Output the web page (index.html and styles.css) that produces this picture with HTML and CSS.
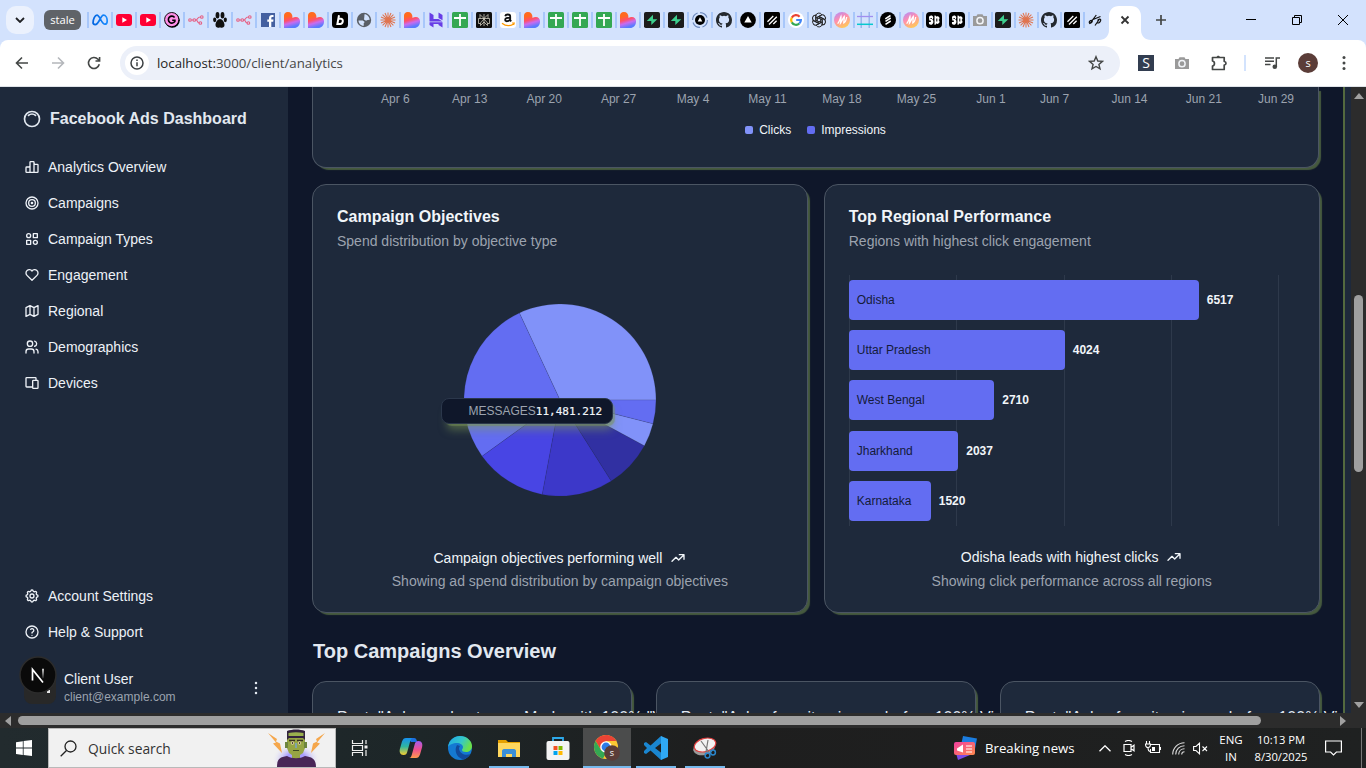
FILE: index.html
```html
<!DOCTYPE html>
<html lang="en">
<head>
<meta charset="utf-8">
<title>Facebook Ads Dashboard</title>
<link rel="stylesheet" href="styles.css">
</head>
<body>
<svg class="defs" width="0" height="0" aria-hidden="true">
  <defs>
    <linearGradient id="gHeart" x1="0" y1="0" x2="0.3" y2="1"><stop offset=".3" stop-color="#ff6a1f"/><stop offset=".55" stop-color="#ff4f6a"/><stop offset=".75" stop-color="#c86bf0"/><stop offset="1" stop-color="#5a7bff"/></linearGradient>
    <linearGradient id="gMeta" x1="0" x2="1"><stop offset="0" stop-color="#0064e0"/><stop offset="1" stop-color="#1a8cff"/></linearGradient>
    <linearGradient id="gM" x1="0" y1="0" x2=".5" y2="1"><stop offset="0" stop-color="#a98bff"/><stop offset=".5" stop-color="#ff8fb0"/><stop offset="1" stop-color="#ffc55c"/></linearGradient>
    <linearGradient id="gCop1" x1="0" y1="0" x2="0" y2="1"><stop offset="0" stop-color="#1690f0"/><stop offset=".5" stop-color="#30b6a0"/><stop offset="1" stop-color="#f7cf2e"/></linearGradient>
    <linearGradient id="gCop2" x1="0" y1="0" x2="0" y2="1"><stop offset="0" stop-color="#a45cf0"/><stop offset=".5" stop-color="#f0508e"/><stop offset="1" stop-color="#ff9a4c"/></linearGradient>
    <linearGradient id="gEdge" x1="0" y1="0" x2="1" y2=".4"><stop offset="0" stop-color="#1ea5e8"/><stop offset=".6" stop-color="#35c8c8"/><stop offset="1" stop-color="#6ae04a"/></linearGradient>
    <linearGradient id="gNews" x1="0" y1="0" x2="1" y2="1"><stop offset="0" stop-color="#f03fa0"/><stop offset="1" stop-color="#ff8a4c"/></linearGradient>
    <radialGradient id="gGlow"><stop offset=".4" stop-color="#a79bff"/><stop offset="1" stop-color="#f1f1f1" stop-opacity="0"/></radialGradient>
    <linearGradient id="gN" x1="0" y1="0" x2="0" y2="1"><stop offset="0" stop-color="#fff"/><stop offset="1" stop-color="#fff" stop-opacity=".1"/></linearGradient>

    <symbol id="meta" viewBox="0 0 16 16"><path d="M1 11.2C1 7 3 3.2 5 3.2c2.800 0 4.500 9 8 9 1.600 0 2.200-1.300 2.200-3.200 0-3-1.500-5.800-3.700-5.800C8.500 3.200 7 12.600 3.200 12.600 1.800 12.600 1 12 1 10.600" fill="none" stroke="url(#gMeta)" stroke-width="1.7"/></symbol>
    <symbol id="yt" viewBox="0 0 16 16"><rect y="2" width="16" height="12" rx="3" fill="#ff0033"/><path d="M6.300 5.300v5.400L11 8z" fill="#fff"/></symbol>
    <symbol id="gp" viewBox="0 0 16 16"><circle cx="8.300" cy="8.300" r="7.500" fill="#000"/><circle cx="7.700" cy="7.600" r="7.100" fill="#ff90e8" stroke="#000" stroke-width=".9"/><path d="M10.600 5.400a3.500 3.500 0 1 0 .3 4V8.200H8.200" fill="none" stroke="#000" stroke-width="1.600"/></symbol>
    <symbol id="n8n" viewBox="0 0 16 16"><g fill="none" stroke="#ea4b71" stroke-width="1.100" opacity=".85"><circle cx="2" cy="8" r="1.300"/><circle cx="6.300" cy="8" r="1.300"/><circle cx="13.800" cy="5" r="1.300"/><circle cx="12.400" cy="11" r="1.300"/><path d="M3.300 8H5M7.600 8c2.600 0 1-3 4.900-3M8 8c2 .2 1 3 3.100 3"/></g></symbol>
    <symbol id="paw" viewBox="0 0 16 16"><g fill="#111"><ellipse cx="5.500" cy="3.300" rx="1.900" ry="3.200"/><ellipse cx="10.500" cy="3.300" rx="1.900" ry="3.200"/><ellipse cx="2.700" cy="7.800" rx="1.600" ry="2.400"/><ellipse cx="13.300" cy="7.800" rx="1.600" ry="2.400"/><path d="M8 7c2.500 0 4.500 3.500 4.500 6s-2.500 3.500-4.500 2.300c-2 1.200-4.500.2-4.500-2.300S5.500 7 8 7z"/></g></symbol>
    <symbol id="fb" viewBox="0 0 16 16"><path fill="#4460a0" d="M1 1h14v14H1z"/><path fill="#fff" d="M9 15V9.700H7.300V7.500H9V6c0-2 1.200-3 3-3h1.500v2h-1c-.9 0-1.200.400-1.200 1.200v1.300h2.200l-.3 2.200h-1.900V15z"/></symbol>
    <symbol id="heart" viewBox="0 0 16 16"><path fill="url(#gHeart)" d="M0 4A3.800 3.800 0 0 1 4 0C7 0 8.600 2 8.500 6c.8-.6 2-1 3.300-1A4.200 4.200 0 0 1 16 9.500C16 13.500 13.500 16 10 16H0z"/></symbol>
    <symbol id="bb" viewBox="0 0 16 16"><rect width="16" height="16" rx="3.500"/><path d="M7 3.300 5.400 12h2.800c3 0 3.600-5 .9-5.300H6.300" fill="none" stroke="#fff" stroke-width="2"/></symbol>
    <symbol id="globe" viewBox="0 0 16 16"><circle cx="8" cy="8" r="7.200" fill="#5a5f66"/><path fill="#d3e3fd" d="M2.500 8.500h4.200l2 1.600-1 1.200.1 2.500c-3 .2-5.300-2.500-5.300-5.300zM8.500 2.300c2.700 0 5 2.600 5.200 5.500l-2.200.2-1.500.8-2-1.300.3-2.500z"/></symbol>
    <symbol id="claude" viewBox="0 0 16 16"><path d="M8 .5v15M.5 8h15M2.600 2.700l10.800 10.600M2.600 13.300 13.400 2.700M5 1l6 14M11 1 5 15M1 5l14 6M1 11l14-6" stroke="#e0744f" stroke-width="1.050"/></symbol>
    <symbol id="host" viewBox="0 0 16 16"><path fill="#673de6" d="M1.500.5 5.500 3v4h5l4 2.500h-13zM10.500 6V.5l4 2.500v5.300zM1.500 10.200H14.500v5.300l-4-2.500v-1H5.500v3.500l-4-2.500z"/></symbol>
    <symbol id="sheet" viewBox="0 0 16 16"><rect width="16" height="16" rx="1.500" fill="#34a853"/><path d="M8 2v12M2 6h12" stroke="#fff" stroke-width="1.800"/></symbol>
    <symbol id="perp" viewBox="0 0 16 16"><rect width="16" height="16" rx="1.500" fill="#101010"/><path d="M8 2v12M4 2.500l4 4 4-4v4.000M4 2.500v4M2.500 6.500h11v5H12L8 7l-4 4.500H2.500zM4.500 11v2.500L8 10l3.500 3.500V11" fill="none" stroke="#e7e2d2" stroke-width=".7"/></symbol>
    <symbol id="amz" viewBox="0 0 16 16"><rect width="16" height="16" rx="3" fill="#fff"/><path d="M5.200 4.200c.5-2.300 5-2.300 5 .2v3.800l1 1.100M10 5.700c-3 0-5 .500-4.800 2.300.3 2 3.800 1.400 4.900-.7" fill="none" stroke="#111" stroke-width="1.800"/><path d="M2 11.200c3.500 2.900 8 2.900 11.500 1M12 11h2.200l-.6 2" fill="none" stroke="#f90" stroke-width="1.200"/></symbol>
    <symbol id="supa" viewBox="0 0 16 16"><rect width="16" height="16" rx="1.800" fill="#1c1c1c"/><path fill="#3ecf8e" d="M9 2.800v4.400h4.300L7.300 13V9H2.800z"/></symbol>
    <symbol id="ring" viewBox="0 0 16 16"><circle cx="8" cy="8" r="7.400" fill="none" stroke="#6a87bc" stroke-width="1.100" stroke-dasharray="9 2.600"/><circle cx="8" cy="8" r="5"/><path fill="#fff" d="m8 5.300 2.300 4.200H5.700z"/></symbol>
    <symbol id="gh" viewBox="0 0 16 16"><path fill="#24292f" d="M8 0C3.580 0 0 3.580 0 8c0 3.540 2.290 6.530 5.470 7.590.4.070.55-.17.55-.38 0-.19-.01-.82-.01-1.490-2.010.37-2.530-.49-2.690-.94-.09-.23-.48-.94-.82-1.130-.28-.15-.68-.52-.01-.53.63-.01 1.080.58 1.230.82.720 1.210 1.870.87 2.330.66.070-.52.280-.87.510-1.070-1.780-.2-3.640-.89-3.640-3.950 0-.87.310-1.590.82-2.150-.08-.2-.36-1.020.08-2.120 0 0 .67-.21 2.200.82a7.700 7.700 0 0 1 4 0c1.530-1.040 2.200-.82 2.200-.82.440 1.100.160 1.920.080 2.120.510.560.820 1.270.820 2.150 0 3.070-1.870 3.750-3.650 3.950.290.250.540.730.540 1.480 0 1.070-.01 1.930-.01 2.200 0 .210.150.460.550.380A8.010 8.010 0 0 0 16 8c0-4.420-3.580-8-8-8z"/></symbol>
    <symbol id="tri" viewBox="0 0 16 16"><circle cx="8" cy="8" r="7.900"/><path fill="#fff" d="m8 4 3.700 6.500H4.300z"/></symbol>
    <symbol id="slash" viewBox="0 0 16 16"><rect width="16" height="16" rx="1.500"/><path d="m3.500 9.800 5.800-5.800M5 12.500 12.800 4.700M9.300 12l3.300-3.300" stroke="#fff" stroke-width="1.300"/></symbol>
    <symbol id="goog" viewBox="0 0 16 16"><circle cx="8" cy="8" r="8" fill="#fff"/><g fill="none" stroke-width="2.200"><path d="M11.600 4.700A4.900 4.900 0 0 0 3.800 5.600" stroke="#ea4335"/><path d="M3.800 5.600a4.900 4.900 0 0 0 0 4.800" stroke="#fbbc05"/><path d="M3.800 10.400a4.900 4.900 0 0 0 7.500 1.100" stroke="#34a853"/><path d="M11.300 11.500A4.900 4.900 0 0 0 12.900 8H8.200" stroke="#4285f4"/></g></symbol>
    <symbol id="oai" viewBox="0 0 16 16"><g fill="none" stroke="#222" stroke-width=".95"><g id="petal"><path d="M4.800 9.500V4.200a3.200 3.200 0 0 1 6-1.500L6.300 5.300V9"/></g><use href="#petal" transform="rotate(60 8 8)"/><use href="#petal" transform="rotate(120 8 8)"/><use href="#petal" transform="rotate(180 8 8)"/><use href="#petal" transform="rotate(240 8 8)"/><use href="#petal" transform="rotate(300 8 8)"/></g></symbol>
    <symbol id="emm" viewBox="0 0 16 16"><circle cx="8" cy="8" r="8" fill="url(#gM)"/><path d="M3.500 11.500C5 11 6 7 7 4.500c.4 2-.4 5-.5 6.500C8 9 9 6 10.300 4.500c.2 2-.6 5-.5 6.500.8-.3 2-1 2.900-6" fill="none" stroke="#fff" stroke-width="1.300"/></symbol>
    <symbol id="frame" viewBox="0 0 16 16"><path d="M4.200 0v16M12.200 0v16" stroke="#8fb0e8" stroke-width="1.300"/><path d="M0 4.500h16" stroke="#a08ff0" stroke-width="1.300"/><path d="M0 12.300h16" stroke="#08c8d0" stroke-width="1.500"/></symbol>
    <symbol id="ess" viewBox="0 0 16 16"><circle cx="8" cy="8" r="8"/><path d="m5.300 6.800 5.200-3.300M5.500 9.300l5.200-3.300M5.500 12.300l5.200-3.300" stroke="#fff" stroke-width="1.500"/></symbol>
    <symbol id="kk" viewBox="0 0 16 16"><rect width="16" height="16" rx="4"/><path fill="#fff" d="M3 5.500C3 3 7 2.500 7.300 5.500c0 1-.4 1.700-1 2.300 1.600.5 1.600 4-.6 4.900C3.500 13.300 2.500 11.500 3 10h1.800V8.500H3.300zM8.500 3.500c1 0 1.700.3 1.700 1.200 1.500-1.200 3.600 0 3.300 1.800-.1.800-.5 1.300-1 1.600 1 .4 1.400 2 .6 3-.8 1-2.200 1-2.900.2 0 1-.7 1.500-1.700 1.500z"/><path d="M4.500 6.500h1.300M10.800 6.500v3" stroke="#000" stroke-width="1"/></symbol>
    <symbol id="cam" viewBox="0 0 16 16"><path fill="#9a9a9a" d="M1 4h3.500l1-1.800h5l1 1.800H15v10H1z"/><circle cx="8" cy="8.700" r="3.100" fill="none" stroke="#f2f4f8" stroke-width="1.500"/></symbol>
    <symbol id="dp" viewBox="0 0 16 16"><path d="M2.500 12 9.300 3M8 13.500 12.500 7M5.500 8.500c-2-1-4.500 2-2.500 2.800 1.300 0 2.500-1.500 2.300-2.800M10.500 8.500c1.500-2.500 4-1.500 3 .5s-2.500 2.500-3.500 1.500M6 7.500 13.500 4.500" fill="none" stroke="#111" stroke-width="1.200"/></symbol>
    <symbol id="trend" viewBox="0 0 24 24"><path d="M3 17l6-6 4 4 8-8M14 7h7v7"/></symbol>
  </defs>
</svg>

<header class="tabstrip">
  <div class="tab-search"><svg width="10" height="6" viewBox="0 0 10 6"><path d="M1 1l4 4 4-4" fill="none" stroke="#202124" stroke-width="1.800"/></svg></div>
  <div class="tab-group">stale</div>
  <div class="tabs">
    <i><svg><use href="#meta"/></svg></i><i><svg><use href="#yt"/></svg></i><i><svg><use href="#yt"/></svg></i><i><svg><use href="#gp"/></svg></i><i><svg><use href="#n8n"/></svg></i><i><svg><use href="#paw"/></svg></i><i><svg><use href="#n8n"/></svg></i><i><svg><use href="#fb"/></svg></i><i><svg><use href="#heart"/></svg></i><i><svg><use href="#heart"/></svg></i><i><svg><use href="#bb"/></svg></i><i><svg><use href="#globe"/></svg></i><i><svg><use href="#claude"/></svg></i><i><svg><use href="#heart"/></svg></i><i><svg><use href="#host"/></svg></i><i><svg><use href="#sheet"/></svg></i><i><svg><use href="#perp"/></svg></i><i><svg><use href="#amz"/></svg></i><i><svg><use href="#heart"/></svg></i><i><svg><use href="#sheet"/></svg></i><i><svg><use href="#sheet"/></svg></i><i><svg><use href="#sheet"/></svg></i><i><svg><use href="#heart"/></svg></i><i><svg><use href="#supa"/></svg></i><i><svg><use href="#supa"/></svg></i><i><svg><use href="#ring"/></svg></i><i><svg><use href="#gh"/></svg></i><i><svg><use href="#tri"/></svg></i><i><svg><use href="#slash"/></svg></i><i><svg><use href="#goog"/></svg></i>
  </div>
  <div class="tabs narrow">
    <i><svg><use href="#oai"/></svg></i><i><svg><use href="#emm"/></svg></i><i><svg><use href="#frame"/></svg></i><i><svg><use href="#ess"/></svg></i><i><svg><use href="#emm"/></svg></i><i><svg><use href="#kk"/></svg></i><i><svg><use href="#kk"/></svg></i><i><svg><use href="#cam"/></svg></i><i><svg><use href="#supa"/></svg></i><i><svg><use href="#claude"/></svg></i><i><svg><use href="#gh"/></svg></i><i><svg><use href="#slash"/></svg></i><i><svg><use href="#dp"/></svg></i>
  </div>
  <div class="tab-active">
    <svg width="52" height="34" viewBox="0 0 52 34"><path fill="#fff" d="M0 34c6 0 10-4 10-10V10C10 4 14 0 20 0h12c6 0 10 4 10 10v14c0 6 4 10 10 10z"/><path d="M22.500 10.500l7 7M29.500 10.500l-7 7" stroke="#333" stroke-width="1.800"/></svg>
  </div>
  <svg class="tab-new" width="12" height="12" viewBox="0 0 12 12"><path d="M6 1v10M1 6h10" stroke="#444746" stroke-width="1.700"/></svg>
  <div class="window-controls">
    <svg width="12" height="12" viewBox="0 0 12 12"><path d="M1 5.500h10" stroke="#000"/></svg>
    <svg width="12" height="12" viewBox="0 0 12 12"><path d="M1.500 3.500h7v7h-7zM3.500 3.500v-2h7v7h-2" fill="none" stroke="#000"/></svg>
    <svg width="12" height="12" viewBox="0 0 12 12"><path d="M1 1l10 10M11 1L1 11" stroke="#000"/></svg>
  </div>
</header>

<div class="toolbar">
  <div class="nav">
    <svg width="16" height="16" viewBox="0 0 16 16"><path d="M14 8H3M8 2.500 2.500 8 8 13.500" fill="none" stroke="#444746" stroke-width="1.600"/></svg>
    <svg width="16" height="16" viewBox="0 0 16 16"><path d="M2 8h11M8 2.500 13.500 8 8 13.500" fill="none" stroke="#b4b7bb" stroke-width="1.600"/></svg>
    <svg width="16" height="16" viewBox="0 0 16 16"><path d="M13.300 9.300A5.500 5.500 0 1 1 12 4.200l1.300 1.400M13.600 2v4H9.500" fill="none" stroke="#444746" stroke-width="1.600"/></svg>
  </div>
  <div class="omnibox">
    <span class="site-info"><svg width="14" height="14" viewBox="0 0 14 14"><circle cx="7" cy="7" r="6" fill="none" stroke="#3c4043" stroke-width="1.500"/><path d="M7 6.300v4M7 3.500v1.600" stroke="#3c4043" stroke-width="1.500"/></svg></span>
    <span class="url"><b>localhost:</b>3000/client/analytics</span>
    <svg class="star" width="16" height="16" viewBox="0 0 16 16"><path d="m8 1.700 1.800 4.300 4.600.4-3.500 3 1.100 4.500L8 11.500l-4 2.400 1.100-4.500-3.500-3 4.600-.4z" fill="none" stroke="#444746" stroke-width="1.400"/></svg>
  </div>
  <div class="extensions">
    <span class="ext-s">S</span>
    <svg class="ext-cam" width="16" height="16"><use href="#cam"/></svg>
    <svg class="ext-puzzle" width="18" height="18" viewBox="0 0 18 18"><path d="M2.500 3.500h11.700v4c2.400.2 2.400 3.300 0 3.500v4.500H2.500V12c2.600-.5 2.600-4.500 0-5z" fill="none" stroke="#444746" stroke-width="1.700" stroke-linejoin="round"/><path d="M6.500 3.300c.2-2.200 3.300-2.200 3.500 0z" fill="#444746"/></svg>
    <span class="divider"></span>
    <svg class="ext-media" width="16" height="14" viewBox="0 0 16 14"><path d="M1 2h9M1 5.300h9M1 8.600h5.500M12.300 11V2H16" fill="none" stroke="#444746" stroke-width="1.500"/><circle cx="10.800" cy="10.800" r="2.300" fill="#444746"/></svg>
    <span class="profile">s</span>
    <svg class="kebab" width="4" height="16" viewBox="0 0 4 16"><g fill="#444746"><circle cx="2" cy="2.500" r="1.500"/><circle cx="2" cy="8" r="1.500"/><circle cx="2" cy="13.500" r="1.500"/></g></svg>
  </div>
</div>

<div class="viewport">
  <aside class="sidebar">
    <div class="brand">
      <svg class="icon brand-icon" viewBox="0 0 24 24"><circle cx="12" cy="12" r="9"/><path d="M16.243 7.757a6 6 0 0 0-8.486 0"/></svg>
      Facebook Ads Dashboard
    </div>
    <nav class="menu">
      <a><svg class="icon" viewBox="0 0 24 24"><path d="M3 13a1 1 0 0 1 1-1h4a1 1 0 0 1 1 1v6a1 1 0 0 1-1 1H4a1 1 0 0 1-1-1zM15 9a1 1 0 0 1 1-1h4a1 1 0 0 1 1 1v10a1 1 0 0 1-1 1h-4a1 1 0 0 1-1-1zM9 5a1 1 0 0 1 1-1h4a1 1 0 0 1 1 1v14a1 1 0 0 1-1 1h-4a1 1 0 0 1-1-1zM4 20h14"/></svg>Analytics Overview</a>
      <a><svg class="icon" viewBox="0 0 24 24"><circle cx="12" cy="12" r="1"/><circle cx="12" cy="12" r="5"/><circle cx="12" cy="12" r="9"/></svg>Campaigns</a>
      <a><svg class="icon" viewBox="0 0 24 24"><circle cx="7" cy="7" r="3"/><path d="M14 4h6v6h-6zM4 14h6v6H4z"/><circle cx="17" cy="17" r="3"/></svg>Campaign Types</a>
      <a><svg class="icon" viewBox="0 0 24 24"><path d="M19.500 12.572l-7.500 7.428l-7.500-7.428a5 5 0 1 1 7.500-6.566a5 5 0 1 1 7.500 6.572"/></svg>Engagement</a>
      <a><svg class="icon" viewBox="0 0 24 24"><path d="M3 7l6-3 6 3 6-3v13l-6 3-6-3-6 3zM9 4v13M15 7v13"/></svg>Regional</a>
      <a><svg class="icon" viewBox="0 0 24 24"><circle cx="9" cy="7" r="4"/><path d="M3 21v-2a4 4 0 0 1 4-4h4a4 4 0 0 1 4 4v2M16 3.130a4 4 0 0 1 0 7.750M21 21v-2a4 4 0 0 0-3-3.850"/></svg>Demographics</a>
      <a><svg class="icon" viewBox="0 0 24 24"><path d="M13 9a1 1 0 0 1 1-1h6a1 1 0 0 1 1 1v10a1 1 0 0 1-1 1h-6a1 1 0 0 1-1-1zM18 8V5a1 1 0 0 0-1-1H4a1 1 0 0 0-1 1v12a1 1 0 0 0 1 1h9"/></svg>Devices</a>
    </nav>
    <nav class="menu menu-bottom">
      <a><svg class="icon" viewBox="0 0 24 24"><path d="M10.325 4.317c.426-1.756 2.924-1.756 3.350 0a1.724 1.724 0 0 0 2.573 1.066c1.543-.94 3.310.826 2.370 2.370a1.724 1.724 0 0 0 1.065 2.572c1.756.426 1.756 2.924 0 3.350a1.724 1.724 0 0 0-1.066 2.573c.94 1.543-.826 3.310-2.370 2.370a1.724 1.724 0 0 0-2.572 1.065c-.426 1.756-2.924 1.756-3.350 0a1.724 1.724 0 0 0-2.573-1.066c-1.543.94-3.310-.826-2.370-2.370a1.724 1.724 0 0 0-1.065-2.572c-1.756-.426-1.756-2.924 0-3.350a1.724 1.724 0 0 0 1.066-2.573c-.94-1.543.826-3.310 2.370-2.370 1 .608 2.296.070 2.572-1.065z"/><circle cx="12" cy="12" r="3"/></svg>Account Settings</a>
      <a><svg class="icon" viewBox="0 0 24 24"><circle cx="12" cy="12" r="9"/><path d="M12 17v.01M12 13.500a1.500 1.500 0 0 1 1-1.500 2.600 2.600 0 1 0-3-4"/></svg>Help &amp; Support</a>
    </nav>
    <div class="user">
      <div class="avatar">
        <span class="avatar-dot"></span>
        <svg class="dev-badge" width="38" height="38" viewBox="0 0 38 38"><circle cx="19" cy="19" r="18" fill="#0a0a0a" stroke="#2c2c2c" stroke-width="1.500"/><path d="M13.500 24.500v-11l10.500 13" fill="none" stroke="#fff" stroke-width="1.700"/><path d="M23.200 12.800h1.600v9.500h-1.600z" fill="url(#gN)"/></svg>
      </div>
      <div class="user-text"><div class="user-name">Client User</div><div class="user-mail">client@example.com</div></div>
      <svg class="user-more" width="16" height="16" viewBox="0 0 24 24"><g fill="#e2e8f0"><circle cx="12" cy="4.500" r="1.900"/><circle cx="12" cy="12" r="1.900"/><circle cx="12" cy="19.500" r="1.900"/></g></svg>
    </div>
  </aside>

  <main class="main">
    <section class="card card-trend">
      <svg class="axis" width="1005" height="24" viewBox="0 0 1005 24">
        <text x="82.300" y="16">Apr 6</text><text x="156.800" y="16">Apr 13</text><text x="231.300" y="16">Apr 20</text><text x="305.600" y="16">Apr 27</text><text x="380" y="16">May 4</text><text x="454.500" y="16">May 11</text><text x="529" y="16">May 18</text><text x="603.500" y="16">May 25</text><text x="678" y="16">Jun 1</text><text x="741.600" y="16">Jun 7</text><text x="816.500" y="16">Jun 14</text><text x="890.800" y="16">Jun 21</text><text x="963" y="16">Jun 29</text>
      </svg>
      <div class="legend"><span class="key key-a"></span>Clicks<span class="key key-b"></span>Impressions</div>
    </section>

    <div class="row-two">
      <section class="card card-chart">
        <h3>Campaign Objectives</h3>
        <p class="sub">Spend distribution by objective type</p>
        <div class="pie-wrap">
          <svg width="192" height="192" viewBox="-96 -96 192 192">
            <g stroke="#1e293b" stroke-opacity=".25" stroke-width=".5">
              <path fill="#8192f9" d="M0 0H96A96 96 0 0 0-40.600-87z"/>
              <path fill="#636df2" d="M0 0-40.600-87A96 96 0 0 0-77.900 56.200z"/>
              <path fill="#4845e4" d="M0 0-77.900 56.200A96 96 0 0 0-17.700 94.400z"/>
              <path fill="#3c38c9" d="M0 0-17.700 94.400A96 96 0 0 0 51.300 81.100z"/>
              <path fill="#3130a2" d="M0 0 51.300 81.100A96 96 0 0 0 84.400 45.800z"/>
              <path fill="#8192f9" d="M0 0 84.400 45.800A96 96 0 0 0 93 23.700z"/>
              <path fill="#636df2" d="M0 0 93 23.700A96 96 0 0 0 96 0z"/>
            </g>
          </svg>
          <div class="tooltip"><span>MESSAGES</span><b>11,481.212</b></div>
        </div>
        <p class="insight">Campaign objectives performing well <svg class="icon"><use href="#trend"/></svg></p>
        <p class="note">Showing ad spend distribution by campaign objectives</p>
      </section>

      <section class="card card-chart">
        <h3>Top Regional Performance</h3>
        <p class="sub">Regions with highest click engagement</p>
        <div class="bars">
          <div class="bar-row"><div class="bar" style="width:350px">Odisha</div><b>6517</b></div>
          <div class="bar-row"><div class="bar" style="width:216px">Uttar Pradesh</div><b>4024</b></div>
          <div class="bar-row"><div class="bar" style="width:145.500px">West Bengal</div><b>2710</b></div>
          <div class="bar-row"><div class="bar" style="width:109.500px">Jharkhand</div><b>2037</b></div>
          <div class="bar-row"><div class="bar" style="width:82px">Karnataka</div><b>1520</b></div>
        </div>
        <p class="insight">Odisha leads with highest clicks <svg class="icon"><use href="#trend"/></svg></p>
        <p class="note">Showing click performance across all regions</p>
      </section>
    </div>

    <h2>Top Campaigns Overview</h2>
    <div class="row-three">
      <section class="card card-campaign">Post: "Ask your best ones Made with 100% "V</section>
      <section class="card card-campaign">Post: "Ask a favorite piece a before 100% Vi</section>
      <section class="card card-campaign">Post: "Ask a favorite piece a before 100% Vi</section>
    </div>
  </main>

  <div class="vscroll">
    <svg width="10" height="6" viewBox="0 0 10 6"><path d="M0 6 5 0l5 6z" fill="#a0a0a0"/></svg>
    <span class="vthumb"></span>
    <svg width="10" height="6" viewBox="0 0 10 6"><path d="M0 0 5 6l5-6z" fill="#a0a0a0"/></svg>
  </div>
</div>

<div class="hscroll">
  <svg width="6" height="10" viewBox="0 0 6 10"><path d="M6 0 0 5l6 5z" fill="#a0a0a0"/></svg>
  <span class="hthumb"></span>
  <svg width="6" height="10" viewBox="0 0 6 10"><path d="M0 0l6 5-6 5z" fill="#a0a0a0"/></svg>
</div>

<footer class="taskbar">
  <div class="start"><svg width="16" height="16" viewBox="0 0 16 16"><path fill="#fff" d="M0 2.200 6.800 1.200v6.400H0zM7.600 1.100 16 0v7.600H7.600zM0 8.400h6.800v6.500L0 13.900zM7.600 8.400H16V16l-8.400-1.100z"/></svg></div>
  <div class="search">
    <svg width="17" height="17" viewBox="0 0 17 17"><circle cx="10.500" cy="6.500" r="5.500" fill="none" stroke="#222" stroke-width="1.300"/><path d="M6.500 10.500.7 16.300" stroke="#222" stroke-width="1.300"/></svg>
    <span>Quick search</span>
    <svg class="doodle" width="60" height="38" viewBox="0 0 60 38">
      <ellipse cx="29" cy="30" rx="24" ry="16" fill="url(#gGlow)"/>
      <path fill="#f5a74c" d="M1 4l9 6-1 2.500 4 2L15 24 6 14.500l3-1zM58 4l-9 6 1 2.500-4 2L44 24l9-9.500-3-1z"/>
      <path fill="#96a544" d="M20 8h18v11l-2 5-3 2v4h-8v-4l-3-2-2-5z"/><path fill="#6d8540" d="M18 13h3v6h-3zM37 13h3v6h-3z"/>
      <path fill="#33243d" d="M20 2c5-2 13-2 18 0v9l-2-2H22l-2 2z"/><path fill="#9ab04e" d="M21.500 4c5-1 10-1 15 0v3h-15z"/>
      <path d="M22 11.500h6M30 11.500h6" stroke="#3a3324" stroke-width="1.500"/>
      <circle cx="25.500" cy="14" r="1.700" fill="#e8d9a8"/><circle cx="32.500" cy="14" r="1.700" fill="#e8d9a8"/><circle cx="25.500" cy="14" r=".8"/><circle cx="32.500" cy="14" r=".8"/>
      <path fill="#7fa3a8" d="M28 14h2v5h-2z"/><path d="M26 21.500h6" stroke="#3d4a22"/><path fill="#492657" d="M10 38c0-7 2-10 10-11 5 3 13 3 18 0 8 1 11 4 11 11z"/>
    </svg>
  </div>
  <div class="apps">
    <span class="app taskview"><svg width="18" height="18" viewBox="0 0 18 18"><path d="M1.500 1v3.500h10V1M1.500 17v-3.500h10V17M1.500 6.500h10v5h-10zM15 1v4M15 11v6" fill="none" stroke="#eee" stroke-width="1.200"/><path fill="#eee" d="M13.500 6.500h3v3h-3z"/></svg></span>
    <span class="app"><svg width="24" height="24" viewBox="0 0 24 24"><path fill="#1b6fe0" d="M9 2h6c2 0 2.500 1.500 3.200 4H12z"/><path fill="url(#gCop1)" d="M7 2h7c-2 0-2.500 2-3.300 5L8.500 15c-.8 3-1.500 4-4 4C1 19 0 16 1 12.500l2-7C4 3 5 2 7 2z"/><path fill="url(#gCop2)" d="M17 22h-7c2 0 2.500-2 3.300-5L15.500 9c.8-3 1.500-4 4-4C23 5 24 8 23 11.500l-2 7C20 21 19 22 17 22z"/></svg></span>
    <span class="app"><svg width="24" height="24" viewBox="0 0 24 24"><circle cx="12" cy="12" r="12" fill="#1479d2"/><path fill="url(#gEdge)" d="M0 11C1 4 6 0 12 0c7 0 12 5 12 10 0 4-3 6-6 6-3 0-4-1-4-2s1-1.200 1-3c0-2-3-4-6-4-4 0-8 2-9 4z"/><path fill="#114a9c" d="M9 9c-3 5-1 12 6 14.500 3-.8 6-3 7.300-5.500C18 20 12 18 11 13c0-1.500.5-2.500 1-3z"/></svg></span>
    <span class="app under"><svg width="22" height="20" viewBox="0 0 22 20"><path fill="#e6a100" d="M0 2h8l2 2h12v5H0z"/><path fill="#ffd75e" d="M0 5h22v14H0z"/><path fill="#3a8fd8" d="M4 19v-6c0-1 .8-2 2-2h10c1.200 0 2 1 2 2v6h-4v-3H8v3z"/></svg></span>
    <span class="app"><svg width="24" height="24" viewBox="0 0 24 24"><path d="M7 6V2h10v4" fill="none" stroke="#2da9ea" stroke-width="1.800"/><rect x=".5" y="5" width="23" height="19" rx="2" fill="#f3f3f3"/><path fill="#f25022" d="M7.500 10h4v4h-4z"/><path fill="#7fba00" d="M12.500 10h4v4h-4z"/><path fill="#00a4ef" d="M7.500 15h4v4h-4z"/><path fill="#ffb900" d="M12.500 15h4v4h-4z"/></svg></span>
    <span class="app under active"><svg width="26" height="26" viewBox="0 0 26 26"><circle cx="12" cy="12" r="12" fill="#fcc934"/><path fill="#ea4335" d="M12 0c4.500 0 8.300 2.300 10.400 6H12l-5 9L1.600 6A12 12 0 0 1 12 0z"/><path fill="#34a853" d="M1.600 6 7 15l5 3-3 5.600A12 12 0 0 1 1.600 6z"/><circle cx="12" cy="12" r="5.800" fill="#fff"/><circle cx="12" cy="12" r="4.400" fill="#2c7be8"/><circle cx="18" cy="18" r="7.800" fill="#5b3d38"/><text x="18" y="21" class="chrome-s">s</text></svg></span>
    <span class="app under"><svg width="24" height="24" viewBox="0 0 24 24"><path fill="#1a86d0" d="M17 0 6.500 9.500 2 6 0 7v2l3 3-3 3v2l2 1 4.500-3.500L17 24l1-1V1zm.5 7v10L11 12z" fill-rule="evenodd"/><path fill="#2fa9f4" d="m17 0 7 3v18l-7 3z"/></svg></span>
    <span class="app under"><svg width="24" height="22" viewBox="0 0 24 22"><ellipse cx="11" cy="11" rx="11" ry="7" fill="#9a9a9a" transform="rotate(-15 11 11)"/><ellipse cx="12" cy="8" rx="11" ry="6.600" fill="#f2f2f2" stroke="#e04040" stroke-width="1.200" transform="rotate(-15 12 8)"/><path d="m8 4 8 11M15 3l-2 12" stroke="#777" stroke-width="1.200"/><circle cx="14.500" cy="18.500" r="2.400" fill="none" stroke="#2a86cc" stroke-width="1.500"/><circle cx="20" cy="15.500" r="2.400" fill="none" stroke="#2a86cc" stroke-width="1.500"/></svg></span>
  </div>
  <div class="tray">
    <svg class="news-icon" width="24" height="24" viewBox="0 0 24 24"><path fill="#1b7de0" d="m10 0 14 2.500L21 18 7 14z"/><path fill="#7a4be8" d="m2 14 15 5-12 5z"/><rect x="1" y="6" width="21" height="13" rx="2" fill="url(#gNews)"/><path fill="#fff" d="m4 12.500 6-4v8l-6-2z"/><path d="M13 10h6M13 13h6M13 16h6" stroke="#fff" stroke-width="1.200"/></svg>
    <span class="news">Breaking news</span>
    <svg class="t-chev" width="12" height="7" viewBox="0 0 12 7"><path d="M.5 6.300 6 .8l5.500 5.500" fill="none" stroke="#fff" stroke-width="1.300"/></svg>
    <svg class="t-meet" width="12" height="16" viewBox="0 0 12 16"><path d="M1 4.500h7v7H1zM8.500 7l2.500-1.800v5.600L8.500 9M2 1.500C4 .3 7 .3 9 1.500M2 14.500c2 1.200 5 1.200 7 0" fill="none" stroke="#fff" stroke-width="1.200"/></svg>
    <svg class="t-batt" width="16" height="14" viewBox="0 0 16 14"><path d="M5.500 3.500h9v8h-9V8M1.500 0v3M4.500 0v3M.5 3h5c0 3-1 3.500-2.500 3.500S.5 6 .5 3zM3 6.500c0 3 .5 4 2.500 4M15.500 6v3" fill="none" stroke="#fff" stroke-width="1.100"/><path fill="#fff" d="M7 6h3v4H7z"/></svg>
    <svg class="t-wifi" width="13" height="13" viewBox="0 0 13 13"><path d="M.7 12.500C.7 6 6 .7 12.500.7M3.700 12.500c0-5 4-8.800 8.800-8.800M6.700 12.500c0-3.500 2.500-5.800 5.800-5.800M9.700 12.500c0-1.800 1-2.800 2.800-2.800" fill="none" stroke="#ddd" stroke-width="1.100"/></svg>
    <svg class="t-vol" width="15" height="13" viewBox="0 0 15 13"><path d="M.6 4.500h2.400l3.500-3.300v10.600L3 8.500H.6zM9.500 4.500l4.500 4.500M14 4.500 9.500 9" fill="none" stroke="#fff" stroke-width="1.100"/></svg>
    <span class="lang">ENG<br>IN</span>
    <span class="clock">10:13 PM<br>8/30/2025</span>
    <svg class="t-note" width="17" height="16" viewBox="0 0 17 16"><path d="M.6 1h15.800v11h-5L8.500 15l-2.900-3h-5z" fill="none" stroke="#fff" stroke-width="1.200"/></svg>
    <span class="peek"></span>
  </div>
</footer>
</body>
</html>
```
FILE: styles.css
```css
* { box-sizing: border-box; }
body { margin: 0; width: 1366px; height: 768px; overflow: hidden; display: flex; flex-direction: column; font-family: "Liberation Sans", Arial, sans-serif; background: #0f172a; }
svg { display: block; flex: none; }
h2, h3, p { margin: 0; }
.defs { position: absolute; }

/* browser tabs */
.tabstrip { height: 40px; flex: none; z-index: 1; background: #d3e2fd; display: flex; align-items: center; padding-left: 6px; }
.tab-search { width: 28px; height: 28px; border-radius: 10px; background: #ebf1fd; display: flex; align-items: center; justify-content: center; }
.tab-group { width: 37px; height: 20px; margin: 0 6px 0 10px; border-radius: 6px; background: #5f6368; color: #fff; font: 11.200px/19px "Open Sans", sans-serif; text-align: center; }
.tabs { display: flex; }
.tabs i { display: flex; width: 24px; height: 16px; border-left: 2px solid #a8c7fa; padding-left: 3px; }
.tabs svg { width: 16px; height: 16px; }
.narrow i { width: 23px; padding-left: 2px; }
.tab-active { align-self: flex-end; margin-left: -7px; }
.tab-new { margin-left: 4px; }
.tab-active, .tab-new { flex: none; }
.window-controls { margin-left: auto; display: flex; gap: 34px; padding-right: 17px; }

/* browser toolbar */
.toolbar { height: 47px; flex: none; z-index: 0; background: #fff; border-bottom: 1px solid #dfe3e8; box-shadow: 0 -8px 0 #d3e2fd; border-radius: 8px 8px 0 0; display: flex; align-items: center; padding-left: 14px; }
.nav { display: flex; gap: 20px; }
.omnibox { width: 1000px; height: 34px; margin-left: 18px; border-radius: 17px; background: #ecf0f9; display: flex; align-items: center; padding-left: 5px; }
.site-info { width: 24px; height: 24px; border-radius: 50%; background: #fff; display: flex; align-items: center; justify-content: center; }
.url { margin-left: 8px; font: 13.250px/20px "Open Sans", sans-serif; color: #474747; white-space: nowrap; }
.url b { font-weight: 400; color: #1f1f1f; }
.star { margin-left: auto; margin-right: 16px; }
.extensions { display: flex; align-items: center; }
.ext-s { width: 16px; height: 16px; margin-left: 18px; background: #323d50; color: #fff; font: 14px/16px "Open Sans", sans-serif; text-align: center; }
.ext-cam { margin-left: 20px; }
.ext-puzzle { margin-left: 20px; }
.divider { width: 2px; height: 16px; background: #d3e3fd; margin-left: 16px; }
.ext-media { margin-left: 18px; }
.profile { width: 20px; height: 20px; margin-left: 18px; border-radius: 50%; background: #5b3d38; color: #fff; font: 11px/19px "Open Sans", sans-serif; text-align: center; }
.kebab { margin-left: 24px; }

/* page */
.viewport { height: 626px; flex: none; display: flex; background: #1e293b; }
.icon { width: 16px; height: 16px; flex: none; fill: none; stroke: currentColor; stroke-width: 2; stroke-linecap: round; stroke-linejoin: round; }
.sidebar { width: 288px; flex: none; display: flex; flex-direction: column; padding: 16px 16px 0; background: #1e293b; color: #e2e8f0; }
.brand { height: 32px; display: flex; align-items: center; gap: 8px; padding-left: 6px; font-size: 16px; font-weight: 700; }
.brand-icon { width: 20px; height: 20px; }
.menu { display: flex; flex-direction: column; gap: 4px; margin-top: 16px; }
.menu a { height: 32px; display: flex; align-items: center; gap: 8px; padding-left: 8px; font-size: 14px; color: #edf1f7; }
.menu-bottom { margin-top: auto; }
.user { height: 48px; margin: 16px 0 1px; padding: 0 8px; display: flex; align-items: center; }
.avatar { position: relative; width: 32px; height: 32px; border-radius: 8px; background: #282828; }
.dev-badge { position: absolute; left: -5px; top: -16px; }
.avatar-dot { position: absolute; left: 23px; top: 18px; width: 3px; height: 3px; background: #e5e5e5; }
.user-text { margin: -2px 0 0 8px; }
.user-name { font-size: 14px; line-height: 18px; color: #edf1f7; }
.user-mail { font-size: 12px; line-height: 16px; margin-top: 1px; color: #9ca3af; }
.user-more { margin-left: auto; }

.main { width: 1055px; flex: none; height: 626px; overflow: hidden; padding-left: 24px; background: #0f172a; }
.card { background: #1e293b; border: 1px solid #4b5563; border-radius: 14px; box-shadow: 3px 3px 1px -1px #465a3f; color: #e2e8f0; }
.card-trend { width: 1007px; height: 81px; border-top: 0; border-radius: 0 0 14px 14px; }
.axis text { font-size: 12px; fill: #9ca3af; text-anchor: middle; }
.legend { display: flex; align-items: center; justify-content: center; height: 16px; margin-top: 11px; font-size: 12px; color: #f1f5f9; }
.key { width: 8px; height: 8px; border-radius: 2px; margin-right: 6px; }
.key-a { background: #8192f9; }
.key-b { background: #636df2; margin-left: 16px; }
.row-two { width: 1007.500px; margin-top: 16px; display: grid; grid-template-columns: 1fr 1fr; gap: 16px; }
.card-chart { height: 429px; padding: 23px 24px 0; }
h3 { font-size: 16px; line-height: 18px; font-weight: 700; color: #f1f5f9; }
.sub { font-size: 14px; line-height: 20px; margin-top: 5px; color: #9ca3af; }
.pie-wrap { position: relative; display: flex; justify-content: center; padding: 53px 0 52px; }
.tooltip { position: absolute; left: 103.500px; top: 147px; width: 172px; height: 26px; border: 1px solid #2b374b; border-radius: 8px; background: #0f172a; display: flex; align-items: center; padding-left: 27px; font-size: 12px; color: #9ca3af; box-shadow: 3px 3px 1px -1px rgba(120,145,85,.5), 3px 9px 9px -3px rgba(125,155,85,.5); }
.tooltip b { font: 11px "DejaVu Sans Mono", monospace; color: #f1f5f9; -webkit-text-stroke: .2px #f1f5f9; }
.insight { display: flex; justify-content: center; align-items: center; gap: 8px; height: 20px; font-size: 14px; color: #f1f5f9; }
.note { text-align: center; font-size: 14px; line-height: 20px; margin-top: 3px; color: #9ca3af; }
.bars { height: 251px; margin: 24px 0 21px; padding-top: 5px; display: flex; flex-direction: column; gap: 10.200px; background: repeating-linear-gradient(90deg, #2e394b 0 1px, transparent 1px 107.300px) 0 0 / 430px 100% no-repeat; }
.bars + .insight + .note { margin-top: 4px; }
.bar-row { display: flex; align-items: center; gap: 8px; font-size: 12px; }
.bar { height: 40px; border-radius: 4px; background: #636df2; color: #141b3a; line-height: 40px; padding-left: 8px; }
.bar-row b { font-size: 12px; color: #f1f5f9; }
h2 { margin-top: 26px; font-size: 20px; line-height: 24px; font-weight: 700; color: #e2e8f0; padding-left: 1px; }
.row-three { width: 1007.500px; margin-top: 18px; display: grid; grid-template-columns: repeat(3, minmax(0, 1fr)); gap: 24px; }
.card-campaign { height: 200px; padding: 24px; font-size: 16px; line-height: 24px; white-space: nowrap; }
.vscroll { width: 23px; background: #2c2c2c; border-left: 2px solid #53693f; box-shadow: inset 6px 0 0 #1e293b; padding: 6px 1px 5px 7px; display: flex; flex-direction: column; align-items: center; }
.vthumb { width: 9px; height: 177px; margin: 196px 0 auto; border-radius: 5px; background: #9f9f9f; }
.hscroll { height: 15px; flex: none; background: #2c2c2c; display: flex; align-items: center; padding: 0 20px 0 5px; }
.hthumb { width: 1243px; height: 9px; margin: 0 auto 0 7px; border-radius: 5px; background: #9f9f9f; }

/* desktop taskbar */
.taskbar { height: 40px; flex: none; display: flex; color: #fff; font-family: "Open Sans", sans-serif; background: linear-gradient(90deg, #222b2e 0, #1d2628 420px, #1e1e1e 720px, #1f2121 100%); }
.start { width: 48px; display: flex; align-items: center; justify-content: center; }
.search { width: 288px; background: #f1f1f1; border: 1px solid #b9b9b9; display: flex; align-items: center; color: #333; font-size: 13.800px; padding-left: 11px; }
.search span { margin-left: 11px; }
.doodle { margin-left: auto; margin-right: 8px; align-self: flex-end; }
.apps { display: flex; }
.app { width: 40px; height: 40px; margin-left: 9px; display: flex; align-items: center; justify-content: center; border-bottom: 2px solid transparent; padding-top: 2px; }
.taskview { margin: 0 2px 0 4px; }
.under { border-color: #76b9ed; }
.active { width: 48px; margin: 0 -4px 0 5px; background: #4b4c4c; }
.chrome-s { font: 9px "Open Sans", sans-serif; fill: #fff; text-anchor: middle; }
.tray { margin-left: auto; display: flex; align-items: center; font-size: 12px; }
.news { font-size: 13.200px; width: 90px; margin-left: 8px; white-space: nowrap; }
.t-chev { margin-left: 24px; }
.t-meet { margin-left: 12px; }
.t-batt { margin-left: 10px; }
.t-wifi { margin-left: 11px; }
.t-vol { margin-left: 8px; }
.lang, .clock { line-height: 17px; text-align: center; white-space: nowrap; }
.lang { width: 28px; margin-left: 9px; font-size: 11.500px; }
.clock { width: 56px; margin-left: 8px; font-size: 11.200px; }
.t-note { margin-left: 16px; }
.peek { width: 1px; height: 40px; margin: 0 4px 0 19px; background: #777; }
```
